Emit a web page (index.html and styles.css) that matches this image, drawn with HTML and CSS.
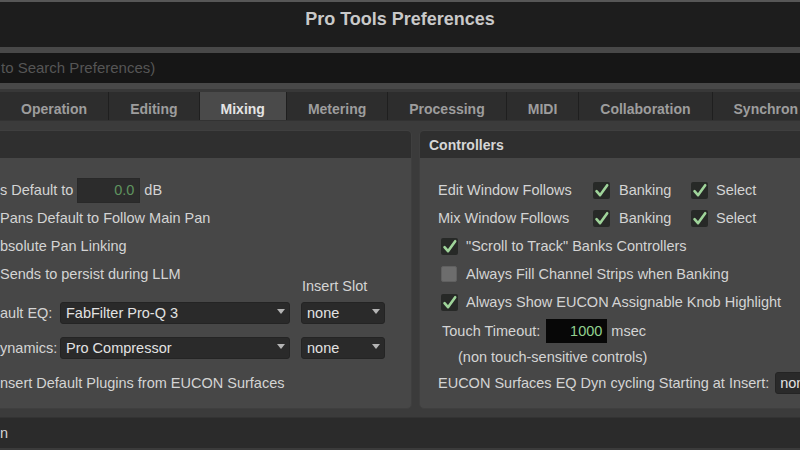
FILE: index.html
```html
<!DOCTYPE html>
<html lang="en">
<head>
  <meta charset="UTF-8" />
  <meta name="viewport" content="width=device-width, initial-scale=1.0" />
  <title>Pro Tools Preferences</title>
  <link rel="stylesheet" href="styles.css">
</head>
<body>
  <div class="titlebar">Pro Tools Preferences</div>

  <div class="search-wrap">
    <div class="search">to Search Preferences)</div>
  </div>

  <div class="tabs">
    <div class="tab">Operation</div>
    <div class="tab">Editing</div>
    <div class="tab active">Mixing</div>
    <div class="tab">Metering</div>
    <div class="tab">Processing</div>
    <div class="tab">MIDI</div>
    <div class="tab">Collaboration</div>
    <div class="tab">Synchron</div>
  </div>

  <div class="panels">
    <div class="panel panel-left">
      <div class="panel-head"></div>
      <div class="panel-body">
        <div class="row">
          <span>s Default to</span>
          <span class="field dim">0.0</span>
          <span class="unit">dB</span>
        </div>
        <div class="row">Pans Default to Follow Main Pan</div>
        <div class="row">bsolute Pan Linking</div>
        <div class="plug-head">
          <span class="plug-wide">Sends to persist during LLM</span>
          <span class="slot-label">Insert Slot</span>
        </div>
        <div class="plug-row">
          <span class="plug-label">ault EQ:</span>
          <div class="select wide"><span>FabFilter Pro-Q 3</span><i class="arrow"></i></div>
          <div class="select slot"><span>none</span><i class="arrow"></i></div>
        </div>
        <div class="plug-row second">
          <span class="plug-label">ynamics:</span>
          <div class="select wide"><span>Pro Compressor</span><i class="arrow"></i></div>
          <div class="select slot"><span>none</span><i class="arrow"></i></div>
        </div>
        <div class="row last">nsert Default Plugins from EUCON Surfaces</div>
      </div>
    </div>

    <div class="panel panel-right">
      <div class="panel-head">Controllers</div>
      <div class="panel-body right-body">
        <div class="row">
          <span class="follow-label">Edit Window Follows</span>
          <svg class="check" viewBox="0 0 17 17"><rect width="17" height="17" rx="2" fill="#272927"/><path d="M3.5 9.2 L7 13.2 L14.2 3.2" fill="none" stroke="#9fd49a" stroke-width="2.6" stroke-linecap="round" stroke-linejoin="round"/></svg>
          <span class="opt">Banking</span>
          <svg class="check" viewBox="0 0 17 17"><rect width="17" height="17" rx="2" fill="#272927"/><path d="M3.5 9.2 L7 13.2 L14.2 3.2" fill="none" stroke="#9fd49a" stroke-width="2.6" stroke-linecap="round" stroke-linejoin="round"/></svg>
          <span class="opt-last">Select</span>
        </div>
        <div class="row">
          <span class="follow-label">Mix Window Follows</span>
          <svg class="check" viewBox="0 0 17 17"><rect width="17" height="17" rx="2" fill="#272927"/><path d="M3.5 9.2 L7 13.2 L14.2 3.2" fill="none" stroke="#9fd49a" stroke-width="2.6" stroke-linecap="round" stroke-linejoin="round"/></svg>
          <span class="opt">Banking</span>
          <svg class="check" viewBox="0 0 17 17"><rect width="17" height="17" rx="2" fill="#272927"/><path d="M3.5 9.2 L7 13.2 L14.2 3.2" fill="none" stroke="#9fd49a" stroke-width="2.6" stroke-linecap="round" stroke-linejoin="round"/></svg>
          <span class="opt-last">Select</span>
        </div>
        <div class="row boxed">
          <svg class="check" viewBox="0 0 17 17"><rect width="17" height="17" rx="2" fill="#272927"/><path d="M3.5 9.2 L7 13.2 L14.2 3.2" fill="none" stroke="#9fd49a" stroke-width="2.6" stroke-linecap="round" stroke-linejoin="round"/></svg>
          <span class="box-text">"Scroll to Track" Banks Controllers</span>
        </div>
        <div class="row boxed">
          <span class="box-off"></span>
          <span class="box-text">Always Fill Channel Strips when Banking</span>
        </div>
        <div class="row boxed">
          <svg class="check" viewBox="0 0 17 17"><rect width="17" height="17" rx="2" fill="#272927"/><path d="M3.5 9.2 L7 13.2 L14.2 3.2" fill="none" stroke="#9fd49a" stroke-width="2.6" stroke-linecap="round" stroke-linejoin="round"/></svg>
          <span class="box-text">Always Show EUCON Assignable Knob Highlight</span>
        </div>
        <div class="row timeout">
          <span>Touch Timeout:</span>
          <span class="field bright">1000</span>
          <span class="unit">msec</span>
        </div>
        <div class="row note">(non touch-sensitive controls)</div>
        <div class="row cycling">
          <span>EUCON Surfaces EQ Dyn cycling Starting at Insert:</span>
          <div class="select cut"><span>none</span></div>
        </div>
      </div>
    </div>
  </div>

  <div class="bottom-bar">n</div>
</body>
</html>
```

FILE: styles.css
```css
body {
  margin: 0;
  width: 800px;
  height: 450px;
  overflow: hidden;
  background-color: #3b3b3b;
  font-family: "Liberation Sans", Arial, sans-serif;
  font-size: 14.5px;
  color: #d4d4d4;
}

.titlebar {
  height: 39px;
  padding-top: 6px;
  border-top: 2px solid #575757;
  background-color: #1d1d1d;
  color: #c9c9c9;
  font-size: 18px;
  font-weight: bold;
  line-height: 22px;
  text-align: center;
}

.search-wrap {
  background-color: #484848;
  padding: 6px 0;
}

.search {
  height: 30px;
  line-height: 30px;
  background-color: #161616;
  color: #555;
  font-size: 15px;
  padding-left: 1px;
}

.tabs {
  display: flex;
  padding-top: 3px;
  background-color: #383838;
  white-space: nowrap;
  font-size: 14px;
}

.tab {
  flex: none;
  height: 23px;
  padding: 5px 21px 0;
  line-height: 24px;
  background-color: #2d2d2d;
  border-right: 1px solid #1f1f1f;
  color: #9d9d9d;
  font-weight: bold;
}

.tab.active {
  background-color: #4a4a4a;
  color: #e4e4e4;
}

.panels {
  display: flex;
  gap: 7px;
  padding-top: 9px;
  border-top: 1px solid #323232;
}

.panel {
  flex: none;
  height: 277px;
  background-color: #474747;
  border: 1px solid #3f3f3f;
  border-radius: 5px;
  overflow: hidden;
}

.panel-left {
  width: 411px;
  border-left: none;
  border-radius: 0 5px 5px 0;
}

.panel-right {
  width: 420px;
}

.panel-head {
  height: 27px;
  line-height: 28px;
  padding-left: 9px;
  background-color: #2f2f2f;
  color: #d6d6d6;
  font-size: 14px;
  font-weight: bold;
}

.panel-body {
  padding-top: 18px;
  white-space: nowrap;
}

.right-body {
  padding-left: 18px;
}

.row {
  display: flex;
  align-items: center;
  height: 28px;
}

.field {
  width: 56px;
  height: 23px;
  line-height: 23px;
  padding-right: 5px;
  text-align: right;
  margin-left: 4px;
}

.field.dim {
  background-color: #2c2c2c;
  border: 1px solid #292929;
  color: #5f935f;
}

.field.bright {
  height: 24px;
  line-height: 24px;
  background-color: #070707;
  color: #92d18f;
  margin-left: 6px;
}

.unit {
  margin-left: 4px;
}

.plug-head {
  display: flex;
  height: 34px;
}

.plug-wide {
  width: 301px;
  line-height: 28px;
}

.slot-label {
  align-self: flex-end;
  line-height: 16px;
  padding-left: 1px;
}

.plug-row {
  display: flex;
  align-items: center;
  height: 22px;
  margin-top: 8px;
}

.plug-row.second {
  margin-top: 13px;
}

.plug-label {
  width: 60px;
}

.select {
  display: flex;
  box-sizing: border-box;
  height: 22px;
  padding: 0 4px 0 5px;
  background-color: #2a2a2a;
  border: 1px solid #242424;
  border-radius: 3px;
  color: #e2e2e2;
  line-height: 20px;
}

.select span {
  flex: 1;
}

.select.wide {
  width: 230px;
  margin-right: 11px;
}

.select.slot {
  width: 84px;
}

.arrow {
  width: 0;
  height: 0;
  margin-top: 6px;
  border-left: 4px solid transparent;
  border-right: 4px solid transparent;
  border-top: 5px solid #b4b4b4;
}

.row.last {
  margin-top: 10px;
}

.follow-label {
  width: 155px;
}

.check {
  flex: none;
  width: 17px;
  height: 17px;
}

.opt {
  width: 72px;
  margin-left: 9px;
}

.opt-last {
  margin-left: 8px;
}

.row.boxed {
  padding-left: 3px;
}

.box-off {
  flex: none;
  box-sizing: border-box;
  width: 16px;
  height: 16px;
  margin-right: 1px;
  background-color: #6d6d6d;
  border: 1px solid #606060;
  border-radius: 2px;
}

.box-text {
  margin-left: 8px;
}

.row.timeout {
  height: 30px;
  padding-left: 4px;
}

.row.note {
  height: 22px;
  padding-left: 20px;
}

.row.cycling {
  height: 30px;
}

.select.cut {
  width: 60px;
  margin-left: 6px;
  padding-left: 4px;
}

.bottom-bar {
  height: 30px;
  margin-top: 8px;
  line-height: 31px;
  background-color: #2b2b2b;
  border-top: 1px solid #333;
  color: #d4d4d4;
}
```
